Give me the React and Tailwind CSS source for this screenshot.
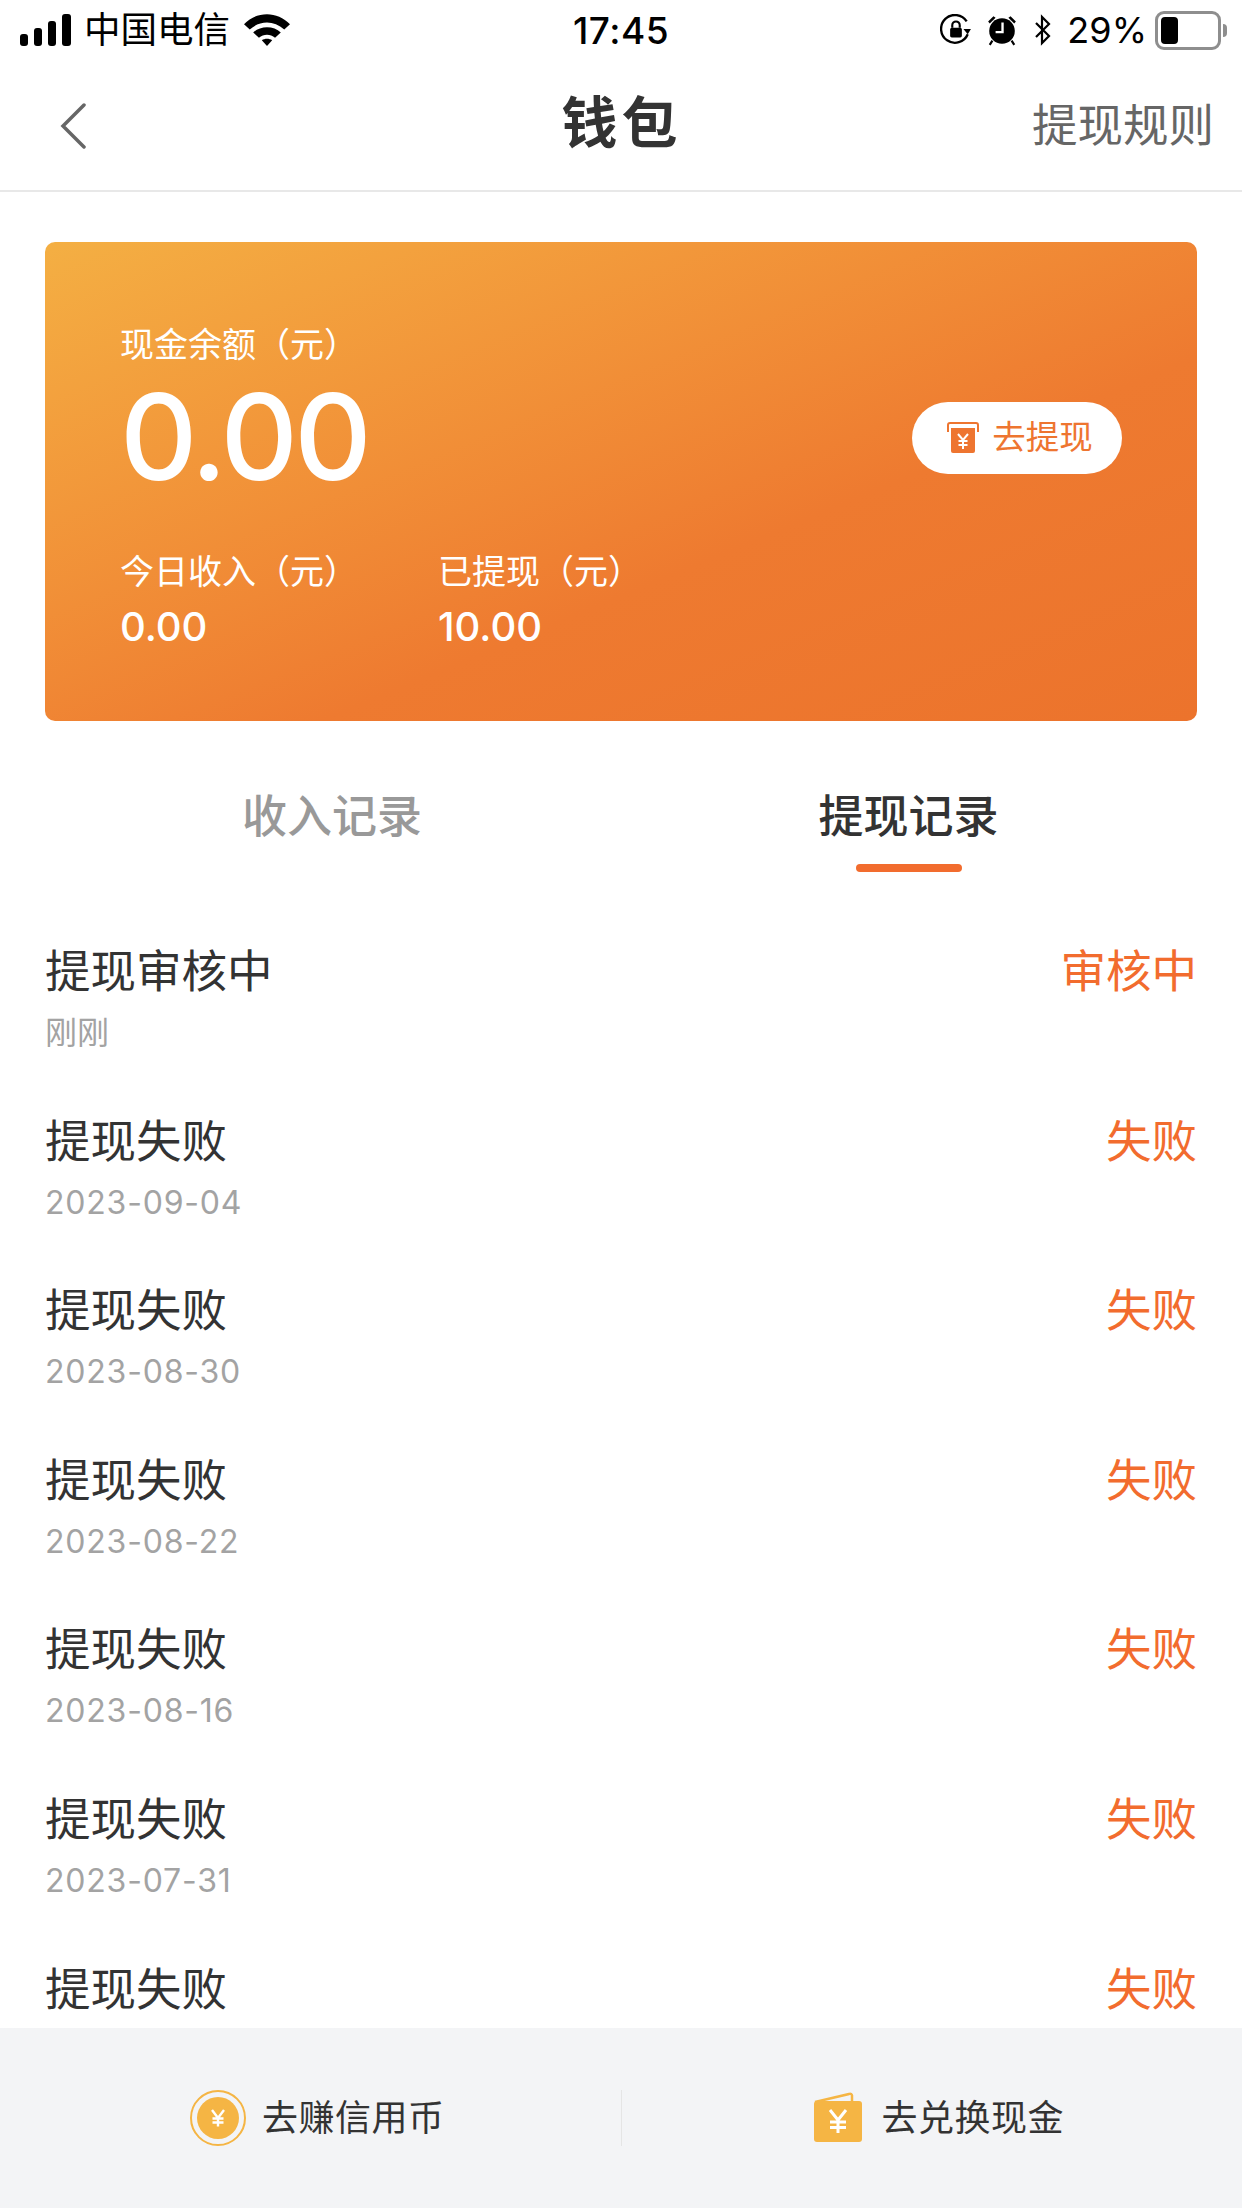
const CJK = { fontFamily: '"Inter","Noto Sans CJK SC",sans-serif' };

const rows = [
  ["提现审核中", "刚刚", "审核中"],
  ["提现失败", "2023-09-04", "失败"],
  ["提现失败", "2023-08-30", "失败"],
  ["提现失败", "2023-08-22", "失败"],
  ["提现失败", "2023-08-16", "失败"],
  ["提现失败", "2023-07-31", "失败"],
  ["提现失败", "", "失败"],
];

function Signal() {
  return (
    <svg width="52" height="32" viewBox="0 0 52 32">
      <rect x="0" y="20" width="8" height="12" rx="3" fill="#000" />
      <rect x="14" y="14" width="8" height="18" rx="3" fill="#000" />
      <rect x="28" y="7" width="8" height="25" rx="3" fill="#000" />
      <rect x="42" y="0" width="9" height="32" rx="3" fill="#000" />
    </svg>
  );
}

function Wifi() {
  return (
    <svg width="46" height="33" viewBox="0 0 40 32" preserveAspectRatio="none">
      <path d="M0 10 C11 -3 29 -3 40 10 L35 15 C26 6 14 6 5 15Z" fill="#000" />
      <path d="M8 18 C14 11 26 11 32 18 L27 23 C23 19 17 19 13 23Z" fill="#000" />
      <path d="M15.500 25.500 C18 23.500 22 23.500 24.500 25.500 L20 31Z" fill="#000" />
    </svg>
  );
}

function RotationLock() {
  return (
    <svg width="32" height="32" viewBox="0 0 30 30">
      <path d="M26 19 A13 13 0 1 1 25 7" fill="none" stroke="#000" strokeWidth="2.200" />
      <path d="M22 14 L29 14 L26 19Z" fill="#000" />
      <rect x="9.500" y="13" width="11" height="9" rx="1.500" fill="#000" />
      <path d="M11.500 13 V10.500 A3.500 3.500 0 0 1 18.500 10.500 V13" fill="none" stroke="#000" strokeWidth="2" />
    </svg>
  );
}

function Alarm() {
  return (
    <svg width="32" height="32" viewBox="0 0 30 30">
      <circle cx="15" cy="16" r="12" fill="#000" />
      <path d="M2 7 L7 2 L9 3.500 L3.500 9Z M28 7 L23 2 L21 3.500 L26.500 9Z" fill="#000" />
      <path d="M6 25 L3.500 29 M24 25 L26.500 29" stroke="#000" strokeWidth="2" />
      <path d="M15.500 8 V17 H9" fill="none" stroke="#fff" strokeWidth="2.200" />
    </svg>
  );
}

function Bluetooth() {
  return (
    <svg width="18" height="34" viewBox="0 0 18 32">
      <path d="M2 9 L15 22 L8 29 V3 L15 10 L2 23" fill="none" stroke="#000" strokeWidth="2.200" />
    </svg>
  );
}

function Battery() {
  return (
    <div className="flex items-center">
      <div className="w-[66px] h-[39px] rounded-[9px] border-[3px] border-[#8e8e8e] p-[3px] flex">
        <div className="w-[17px] h-full rounded-[4px] bg-black" />
      </div>
      <div className="w-[4px] h-[13px] ml-[2px] rounded-r-[4px] bg-[#8e8e8e]" />
    </div>
  );
}

function YenGlyph({ size, color }) {
  return (
    <svg width={size} height={size} viewBox="0 0 20 20">
      <path d="M4 2 L10 10 L16 2 M10 10 V18.500 M4.500 10.500 H15.500 M4.500 14.500 H15.500" fill="none" stroke={color} strokeWidth="2.400" />
    </svg>
  );
}

function WithdrawIcon() {
  return (
    <svg width="34" height="34" viewBox="0 0 34 34">
      <path d="M2 11 V4 A2 2 0 0 1 4 2 H30 A2 2 0 0 1 32 4 V11" fill="none" stroke="#ee7530" strokeWidth="2" />
      <path d="M5 7 H29 V30 A2 2 0 0 1 27 32 H7 A2 2 0 0 1 5 30Z" fill="#ee7530" />
      <path d="M12 13 L17 19 L22 13 M17 19 V28 M12.500 20 H21.500 M12.500 24 H21.500" fill="none" stroke="#fff" strokeWidth="2" />
    </svg>
  );
}

function CoinIcon() {
  return (
    <div className="w-[56px] h-[56px] rounded-full border-2 border-[#f5b544] flex items-center justify-center">
      <div className="w-[42px] h-[42px] rounded-full bg-[#f5b544] flex items-center justify-center">
        <YenGlyph size={20} color="#fff" />
      </div>
    </div>
  );
}

function WalletIcon() {
  return (
    <svg width="50" height="52" viewBox="0 0 50 52">
      <path d="M2 10 L36 2 A2 2 0 0 1 39 4 V9" fill="none" stroke="#f5b544" strokeWidth="2.500" />
      <rect x="1" y="9" width="48" height="41" rx="3" fill="#f5b544" />
      <path d="M17 18 L25 28 L33 18 M25 28 V41 M17 30 H33 M17 35.500 H33" fill="none" stroke="#fff" strokeWidth="3" />
    </svg>
  );
}

function Row({ title, sub, status, first }) {
  return (
    <div className="h-[169.600px] shrink-0 flex justify-between">
      <div>
        <div className="text-[45.500px] leading-[60px] text-[#333333]">{title}</div>
        {sub ? (
          <div className={`text-[32px] leading-[40px] mt-[11px] text-[#a3a3a3] ${first ? "" : "tracking-[0.800px]"}`}>{sub}</div>
        ) : null}
      </div>
      <div className="text-[45.500px] leading-[60px] text-[#f26c2e]">{status}</div>
    </div>
  );
}

export default function App() {
  return (
    <div className="w-[1242px] h-[2208px] bg-white flex flex-col overflow-hidden" style={CJK}>
      <div className="h-[60px] shrink-0 pl-[20px] pr-[15px] flex items-center justify-between relative text-black">
        <div className="flex items-center">
          <Signal />
          <span className="ml-[12px] text-[36.500px] leading-none">中国电信</span>
          <span className="ml-[14px]"><Wifi /></span>
        </div>
        <div className="absolute left-[573px] top-[10px] text-[37px] leading-[42px] font-medium tracking-[0.5px]">17:45</div>
        <div className="flex items-center">
          <RotationLock />
          <span className="ml-[14px]"><Alarm /></span>
          <span className="ml-[16px]"><Bluetooth /></span>
          <span className="ml-[15px] text-[36px] leading-none">29%</span>
          <span className="ml-[8px]"><Battery /></span>
        </div>
      </div>

      <div className="h-[132px] shrink-0 border-b-2 border-[#e8e8e8] flex items-center justify-between relative pl-[60px] pr-[28px]">
        <svg width="26" height="46" viewBox="0 0 26 46" className="mt-[2px]">
          <path d="M24 2 L3 23 L24 44" fill="none" stroke="#666666" strokeWidth="3.500" strokeLinecap="round" />
        </svg>
        <div className="absolute left-[1px] right-0 top-[27px] text-center text-[56px] leading-[72px] font-bold tracking-[4px] text-[#333333]">钱包</div>
        <div className="text-[45.500px] leading-[60px] text-[#666666] mt-[2px]">提现规则</div>
      </div>

      <div className="mx-[45px] mt-[50px] h-[479px] shrink-0 rounded-[10px] bg-gradient-to-br from-[#f4af43] via-[#ee7a30] via-[62%] to-[#ec732c] px-[75px] pt-[81px] text-white flex justify-between">
        <div>
          <div className="text-[34px] leading-[44px]">现金余额（元）</div>
          <div className="text-[120px] leading-[130px] mt-[5px] tracking-[-3.500px] font-medium">0.00</div>
          <div className="flex mt-[48px]">
            <div className="w-[318px]">
              <div className="text-[34px] leading-[44px]">今日收入（元）</div>
              <div className="text-[40px] leading-[52px] mt-[7px] font-medium">0.00</div>
            </div>
            <div>
              <div className="text-[34px] leading-[44px]">已提现（元）</div>
              <div className="text-[40px] leading-[52px] mt-[7px] font-medium">10.00</div>
            </div>
          </div>
        </div>
        <div className="h-[72px] w-[210px] mt-[79px] pl-[5px] rounded-full bg-white flex items-center justify-center gap-[12px]">
          <WithdrawIcon />
          <span className="text-[33.500px] leading-none text-[#ee7530]">去提现</span>
        </div>
      </div>

      <div className="h-[152px] shrink-0 flex text-[45px] leading-[60px] font-medium">
        <div className="w-1/2 flex justify-center pt-[66px] pl-[43px] text-[#999999]">收入记录</div>
        <div className="w-1/2 flex flex-col items-center pt-[66px] pr-[46px] text-[#333333]">
          <div>提现记录</div>
          <div className="w-[106px] h-[8px] mt-[17px] rounded-full bg-[#f26c2e]" />
        </div>
      </div>

      <div className="flex-1 min-h-0 overflow-hidden px-[45px] pt-[69px] flex flex-col">
        {rows.map((r, i) => (
          <Row key={i} title={r[0]} sub={r[1]} status={r[2]} first={i === 0} />
        ))}
      </div>

      <div className="h-[180px] shrink-0 bg-[#f3f4f6] flex items-center text-[36px] text-[#333333]">
        <div className="flex-1 flex items-center justify-center gap-[16px] pl-[14px]">
          <CoinIcon />
          <span className="tracking-[0.500px]">去赚信用币</span>
        </div>
        <div className="w-[1px] h-[56px] bg-[#e5e5e5]" />
        <div className="flex-1 flex items-center justify-center gap-[18px] pl-[14px]">
          <WalletIcon />
          <span className="tracking-[0.500px]">去兑换现金</span>
        </div>
      </div>
    </div>
  );
}
